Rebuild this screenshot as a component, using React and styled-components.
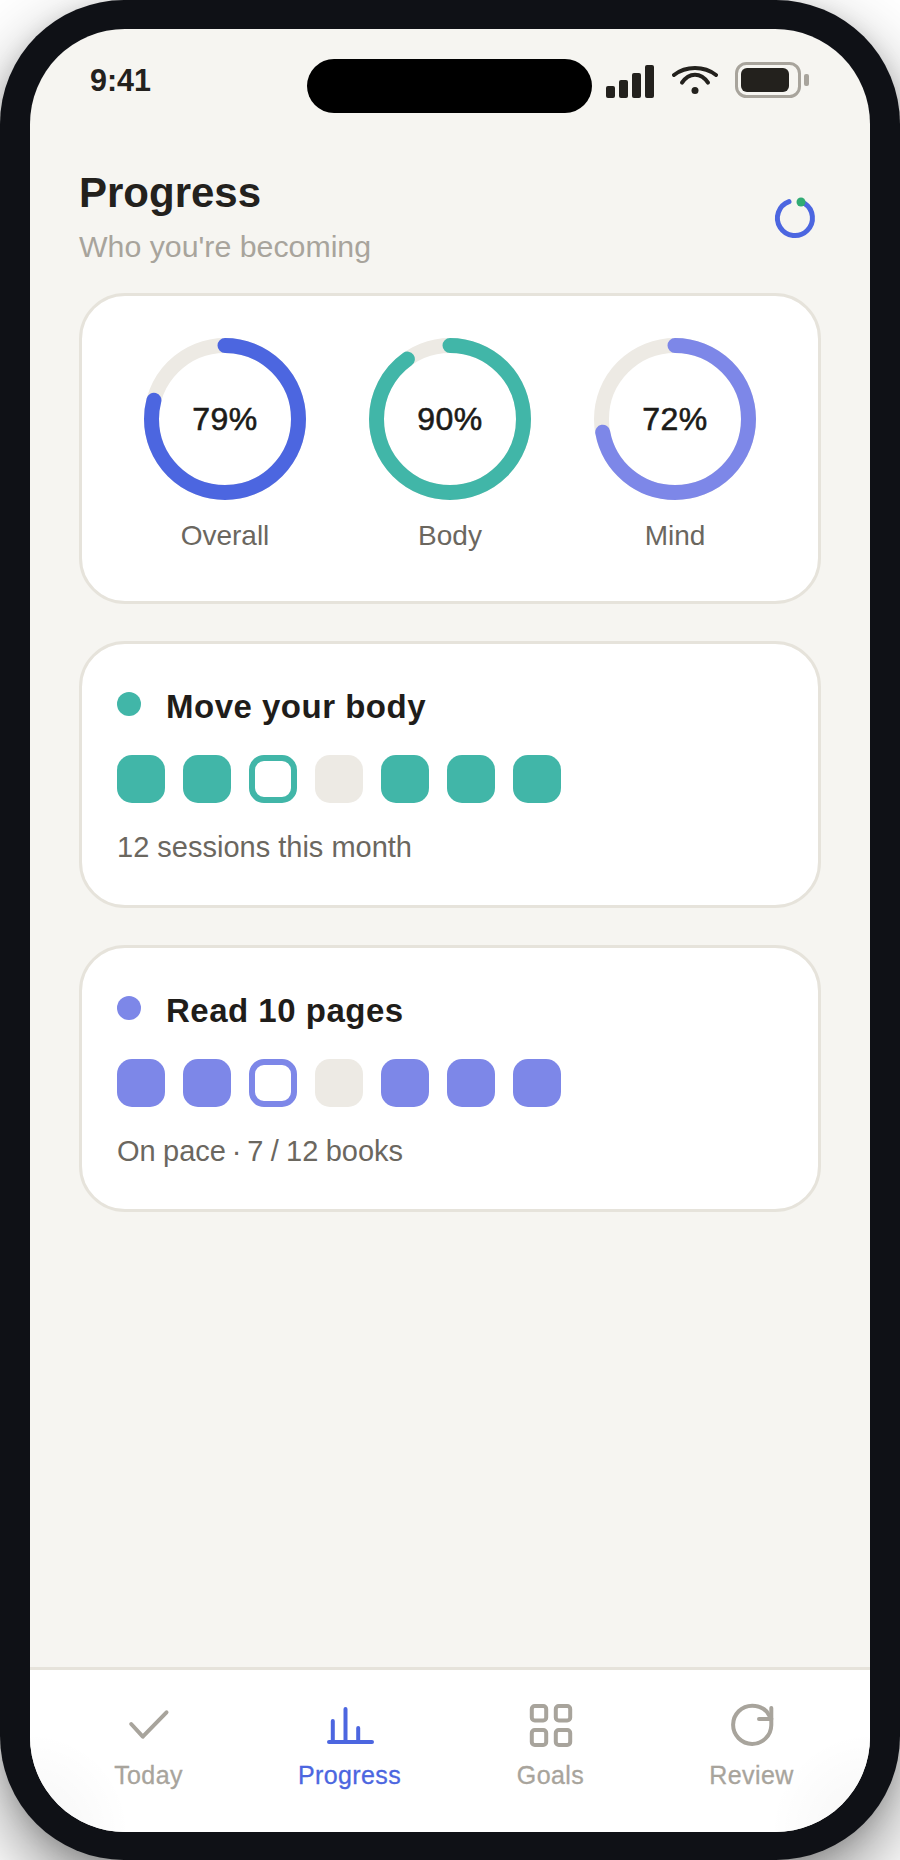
import React from "react";
import styled, { createGlobalStyle } from "styled-components";

const Global = createGlobalStyle`
  html, body { margin: 0; padding: 0; background: #fff; }
  body { font-family: "Liberation Sans", Arial, sans-serif; }
`;

const Frame = styled.div`
  box-sizing: border-box;
  width: 900px;
  height: 1860px;
  padding: 29px 30px 28px;
  background: #0f1116;
  border-radius: 124px;
  box-shadow: 0 30px 70px rgba(0, 0, 0, 0.45), 0 4px 20px rgba(0, 0, 0, 0.12);
`;

const Screen = styled.div`
  height: 100%;
  display: flex;
  flex-direction: column;
  background: #f6f5f1;
  border-radius: 95px;
  overflow: hidden;
`;

const StatusBar = styled.div`
  display: grid;
  grid-template-columns: 1fr 285px 1fr;
  align-items: start;
  padding: 30px 60px 0;
`;

const Time = styled.div`
  font-size: 30.5px;
  font-weight: 700;
  line-height: 36px;
  color: #23211d;
  margin-top: 3px;
`;

const Island = styled.div`
  height: 54px;
  margin-left: -1px;
  margin-right: 1px;
  background: #000;
  border-radius: 27px;
`;

const StatusIcons = styled.div`
  display: flex;
  justify-content: flex-end;
  align-items: flex-start;
  gap: 17.5px;
  height: 54px;
  padding-top: 3px;
  box-sizing: border-box;
  margin-left: -12px;
`;

const Main = styled.div`
  flex: 1;
  display: flex;
  flex-direction: column;
  gap: 37px;
  padding: 0 49px;
`;

const Header = styled.div`
  display: flex;
  justify-content: space-between;
  align-items: flex-end;
  margin-top: 55px;
  margin-bottom: -9px;
`;

const Title = styled.h1`
  margin: 0;
  font-size: 42px;
  line-height: 50px;
  font-weight: 700;
  color: #23211d;
`;

const Subtitle = styled.p`
  margin: 11px 0 0;
  font-size: 30.3px;
  line-height: 36px;
  color: #a8a49c;
`;

const Logo = styled.svg`
  margin-right: 2px;
  margin-bottom: 23px;
`;

const Card = styled.section`
  border: 3px solid #e6e3db;
  border-radius: 46px;
  background: #fff;
`;

const RingsCard = styled(Card)`
  display: flex;
  justify-content: center;
  gap: 63px;
  padding: 42px 0 47px;
`;

const RingBlock = styled.div`
  display: flex;
  flex-direction: column;
  align-items: center;
  gap: 18px;
`;

const RingStack = styled.div`
  display: grid;
  width: 162px;
  height: 162px;
  place-items: center;
  & > * { grid-area: 1 / 1; }
`;

const RingValue = styled.span`
  font-size: 32px;
  letter-spacing: 0.5px;
  color: #1c1b18;
  -webkit-text-stroke: 0.6px #1c1b18;
`;

const RingLabel = styled.span`
  font-size: 28px;
  line-height: 36px;
  color: #6b675f;
`;

const HabitCard = styled(Card)`
  padding: 35px 35px 40px;
`;

const HabitHead = styled.div`
  display: flex;
  align-items: flex-start;
  gap: 25px;
`;

const Dot = styled.span`
  width: 24px;
  height: 24px;
  margin-top: 13px;
  border-radius: 50%;
  background: ${(p) => p.$color};
`;

const HabitName = styled.h2`
  margin: 8px 0 0;
  font-size: 33px;
  line-height: 40px;
  font-weight: 700;
  letter-spacing: 0.5px;
  color: #1f1d1a;
`;

const Days = styled.div`
  display: flex;
  gap: 18px;
  margin-top: 28px;
`;

const Day = styled.span`
  box-sizing: border-box;
  width: 48px;
  height: 48px;
  border-radius: 15px;
  background: ${(p) => (p.$state === "done" ? p.$color : p.$state === "today" ? "#fff" : "#edeae4")};
  border: ${(p) => (p.$state === "today" ? `6px solid ${p.$color}` : "none")};
`;

const Note = styled.p`
  margin: 26px 0 0;
  font-size: 29px;
  line-height: 36px;
  word-spacing: ${(p) => (p.$tight ? "-0.7px" : "0")};
  color: #6b675f;
`;

const TabBar = styled.nav`
  display: grid;
  grid-template-columns: repeat(4, 1fr);
  padding: 30px 18px 0;
  height: 165px;
  box-sizing: border-box;
  border-top: 3px solid #e6e3db;
  background:
    radial-gradient(circle at 0 100%, rgba(0, 0, 0, 0.04), transparent 100px),
    radial-gradient(circle at 100% 100%, rgba(0, 0, 0, 0.04), transparent 100px),
    #fff;
`;

const Tab = styled.div`
  display: flex;
  flex-direction: column;
  align-items: center;
  gap: 11px;
  color: ${(p) => (p.$active ? "#4c66e0" : "#a8a49c")};
`;

const TabLabel = styled.span`
  font-size: 25px;
  line-height: 32px;
  letter-spacing: 0.4px;
  -webkit-text-stroke: 0.3px currentColor;
`;

const Ring = ({ pct, color, label }) => {
  const r = 73.5;
  const c = 2 * Math.PI * r;
  return (
    <RingBlock>
      <RingStack>
        <svg width="162" height="162" viewBox="0 0 162 162">
          <circle cx="81" cy="81" r={r} fill="none" stroke="#edeae4" strokeWidth="15" />
          <circle
            cx="81" cy="81" r={r} fill="none" stroke={color} strokeWidth="15" strokeLinecap="round"
            strokeDasharray={`${(c * pct) / 100} ${c}`} transform="rotate(-90 81 81)"
          />
        </svg>
        <RingValue>{pct}%</RingValue>
      </RingStack>
      <RingLabel>{label}</RingLabel>
    </RingBlock>
  );
};

const Habit = ({ color, name, note, tight }) => (
  <HabitCard>
    <HabitHead>
      <Dot $color={color} />
      <HabitName>{name}</HabitName>
    </HabitHead>
    <Days>
      {["done", "done", "today", "off", "done", "done", "done"].map((s, i) => (
        <Day key={i} $state={s} $color={color} />
      ))}
    </Days>
    <Note $tight={tight}>{note}</Note>
  </HabitCard>
);

const Icon = ({ children }) => (
  <svg width="48" height="48" viewBox="0 0 48 48" fill="none" stroke="currentColor" strokeWidth="4" strokeLinecap="round" strokeLinejoin="round">
    {children}
  </svg>
);

export default function App() {
  return (
    <Frame>
      <Global />
      <Screen>
        <StatusBar>
          <Time>9:41</Time>
          <Island />
          <StatusIcons>
            <svg width="48" height="36" viewBox="0 0 48 36" fill="#23211d">
              <rect x="0" y="24" width="9" height="12" rx="2" />
              <rect x="13" y="18" width="9" height="18" rx="2" />
              <rect x="26" y="11" width="9" height="25" rx="2" />
              <rect x="39" y="3" width="9" height="33" rx="2" />
            </svg>
            <svg width="46" height="36" viewBox="0 0 46 36" fill="none" stroke="#23211d" strokeWidth="4" strokeLinecap="round">
              <path d="M2 13C14 3.7 32 3.7 44 13" />
              <path d="M10 20.7C17 10 29 10 36 20.7" />
              <circle cx="23" cy="28.5" r="3.5" fill="#23211d" stroke="none" />
            </svg>
            <svg width="75" height="36" viewBox="0 0 75 36">
              <rect x="1.5" y="1.5" width="63" height="33" rx="10" fill="none" stroke="#a8a49c" strokeWidth="3" />
              <rect x="6" y="6" width="48" height="24" rx="6" fill="#23211d" />
              <rect x="69" y="12" width="5" height="12" rx="2" fill="#a8a49c" />
            </svg>
          </StatusIcons>
        </StatusBar>
        <Main>
          <Header>
            <div>
              <Title>Progress</Title>
              <Subtitle>Who you're becoming</Subtitle>
            </div>
            <Logo width="48" height="48" viewBox="0 0 48 48">
              <path d="M33.5 9.4A17.5 17.5 0 1 1 18 7.6" fill="none" stroke="#4c66e0" strokeWidth="5" strokeLinecap="round" />
              <circle cx="30" cy="8" r="4.5" fill="#31ab74" />
            </Logo>
          </Header>
          <RingsCard>
            <Ring pct={79} color="#4c66e0" label="Overall" />
            <Ring pct={90} color="#41b6a8" label="Body" />
            <Ring pct={72} color="#7d87e8" label="Mind" />
          </RingsCard>
          <Habit color="#41b6a8" name="Move your body" note="12 sessions this month" />
          <Habit color="#7d87e8" name="Read 10 pages" note={"On pace\u2009·\u20097 / 12 books"} tight />
        </Main>
        <TabBar>
          <Tab>
            <Icon><path d="M6.2 24 17.8 36.7 41.5 12.3" /></Icon>
            <TabLabel>Today</TabLabel>
          </Tab>
          <Tab $active>
            <Icon><path d="M3 42H46M6.8 42V21M19.5 42V9M32.2 42V28" /></Icon>
            <TabLabel>Progress</TabLabel>
          </Tab>
          <Tab>
            <Icon>
              <rect x="4.8" y="6" width="14.4" height="14.4" rx="3" />
              <rect x="28.8" y="6" width="14.4" height="14.4" rx="3" />
              <rect x="4.8" y="30" width="14.4" height="15" rx="3" />
              <rect x="28.8" y="30" width="14.4" height="15" rx="3" />
            </Icon>
            <TabLabel>Goals</TabLabel>
          </Tab>
          <Tab>
            <Icon>
              <path d="M43.3 19V25A19.1 19.1 0 1 1 24.2 5.7C30 5.7 35 8 38.7 11.5L43.3 19" />
              <path d="M43.3 8V19H31" />
            </Icon>
            <TabLabel>Review</TabLabel>
          </Tab>
        </TabBar>
      </Screen>
    </Frame>
  );
}
